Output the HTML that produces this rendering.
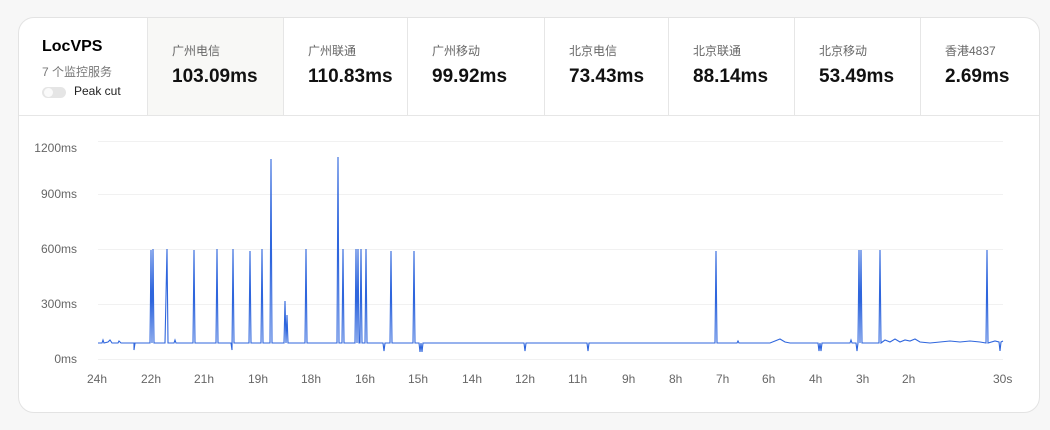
<!DOCTYPE html>
<html><head><meta charset="utf-8"><style>
body{margin:0;width:1050px;height:430px;background:#f7f7f7;font-family:"Liberation Sans","Noto Sans CJK SC",sans-serif;overflow:hidden;position:relative}
.card{position:absolute;left:18px;top:17px;width:1022px;height:396px;background:#fff;border:1px solid #e3e3e3;border-radius:16px;box-sizing:border-box;overflow:hidden}
.hdr{position:absolute;left:0;top:0;width:100%;height:97px;border-bottom:1px solid #e6e6e6}
.col{position:absolute;top:0;height:97px;border-left:1px solid #e6e6e6;box-sizing:border-box;padding-left:24px}
.lab{position:absolute;top:24px;font-size:12px;color:#666}
.val{position:absolute;top:48px;font-size:19px;font-weight:bold;color:#111}
.yl{position:absolute;font-size:12px;color:#666;text-align:right;width:60px;left:17px}
.xl{position:absolute;font-size:12px;color:#666;top:355px}
</style></head><body>
<div class="card">
<div class="hdr">
 <div style="position:absolute;left:23px;top:20px;font-size:16px;font-weight:bold;color:#000">LocVPS</div>
 <div style="position:absolute;left:23px;top:45px;font-size:12px;color:#777">7 个监控服务</div>
 <div style="position:absolute;left:23px;top:69px;width:24px;height:11px;border-radius:6px;background:#e5e5e5"><div style="position:absolute;left:2px;top:1px;width:9px;height:9px;border-radius:50%;background:#fafafa"></div></div>
 <div style="position:absolute;left:55px;top:66px;font-size:12px;color:#222">Peak cut</div>
 <div class="col" style="left:128px;width:136px;background:#f8f8f6"><div class="lab">广州电信</div><div class="val">103.09ms</div></div>
 <div class="col" style="left:264px;width:124px"><div class="lab">广州联通</div><div class="val">110.83ms</div></div>
 <div class="col" style="left:388px;width:137px"><div class="lab">广州移动</div><div class="val">99.92ms</div></div>
 <div class="col" style="left:525px;width:124px"><div class="lab">北京电信</div><div class="val">73.43ms</div></div>
 <div class="col" style="left:649px;width:126px"><div class="lab">北京联通</div><div class="val">88.14ms</div></div>
 <div class="col" style="left:775px;width:126px"><div class="lab">北京移动</div><div class="val">53.49ms</div></div>
 <div class="col" style="left:901px;width:121px"><div class="lab">香港4837</div><div class="val">2.69ms</div></div>
</div>
</div>
<div class="yl" style="top:141px">1200ms</div>
<div class="yl" style="top:187px">900ms</div>
<div class="yl" style="top:242px">600ms</div>
<div class="yl" style="top:297px">300ms</div>
<div class="yl" style="top:352px">0ms</div>
<div class="xl" style="left:87px;top:372px">24h</div>
<div class="xl" style="left:141px;top:372px">22h</div>
<div class="xl" style="left:194px;top:372px">21h</div>
<div class="xl" style="left:248px;top:372px">19h</div>
<div class="xl" style="left:301px;top:372px">18h</div>
<div class="xl" style="left:355px;top:372px">16h</div>
<div class="xl" style="left:408px;top:372px">15h</div>
<div class="xl" style="left:462px;top:372px">14h</div>
<div class="xl" style="left:515px;top:372px">12h</div>
<div class="xl" style="left:568px;top:372px">11h</div>
<div class="xl" style="left:622px;top:372px">9h</div>
<div class="xl" style="left:669px;top:372px">8h</div>
<div class="xl" style="left:716px;top:372px">7h</div>
<div class="xl" style="left:762px;top:372px">6h</div>
<div class="xl" style="left:809px;top:372px">4h</div>
<div class="xl" style="left:856px;top:372px">3h</div>
<div class="xl" style="left:902px;top:372px">2h</div>
<div class="xl" style="left:993px;top:372px">30s</div>
<svg style="position:absolute;left:0;top:0" width="1050" height="430">
<g stroke="#f1f1f1" stroke-width="1">
<line x1="98" y1="141.5" x2="1003" y2="141.5"/><line x1="98" y1="194.5" x2="1003" y2="194.5"/><line x1="98" y1="249.5" x2="1003" y2="249.5"/><line x1="98" y1="304.5" x2="1003" y2="304.5"/><line x1="98" y1="359.5" x2="1003" y2="359.5"/>
</g>
<polyline fill="none" stroke="#2f66dd" stroke-width="1.1" points="98,343 102,343 103,340 104,343 108,342 110,340 112,343 118,343 119,341 121,343 130,343 134,343 134,350 135,343 150,343 151,250 152,343 153,249 154,343 165,343 167,249 168,343 174,343 175,340 176,343 193,343 194,250 195,343 216,343 217,249 218,343 231,343 232,350 233,249 234,343 249,343 250,251 251,343 261,343 262,249 263,343 270,343 271,159 272,343 284,343 285,301 286,343 287,315 288,343 305,343 306,249 307,343 337,343 338,157 339,343 342,343 343,249 344,343 355,343 356,249 357,343 358,249 359,343 360,343 361,249 362,343 365,343 366,249 367,343 383,343 384,351 385,343 390,343 391,251 392,343 413,343 414,251 415,343 419,343 420,352 421,343 422,352 423,343 524,343 525,351 526,343 587,343 588,351 589,343 715,343 716,251 717,343 737,343 738,341 739,343 770,343 775,341 780,339 785,342 790,343 818,343 819,351 820,343 821,351 822,343 850,343 851,340 852,343 856,343 857,351 858,343 859,250 860,343 861,250 862,343 879,343 880,250 881,343 885,340 890,342 895,339 900,342 905,340 910,341 915,339 920,342 930,343 940,342 950,341 960,342 970,341 980,342 986,343 987,250 988,343 995,341 999,342 1000,351 1001,342 1003,341"/>
</svg>
</body></html>
